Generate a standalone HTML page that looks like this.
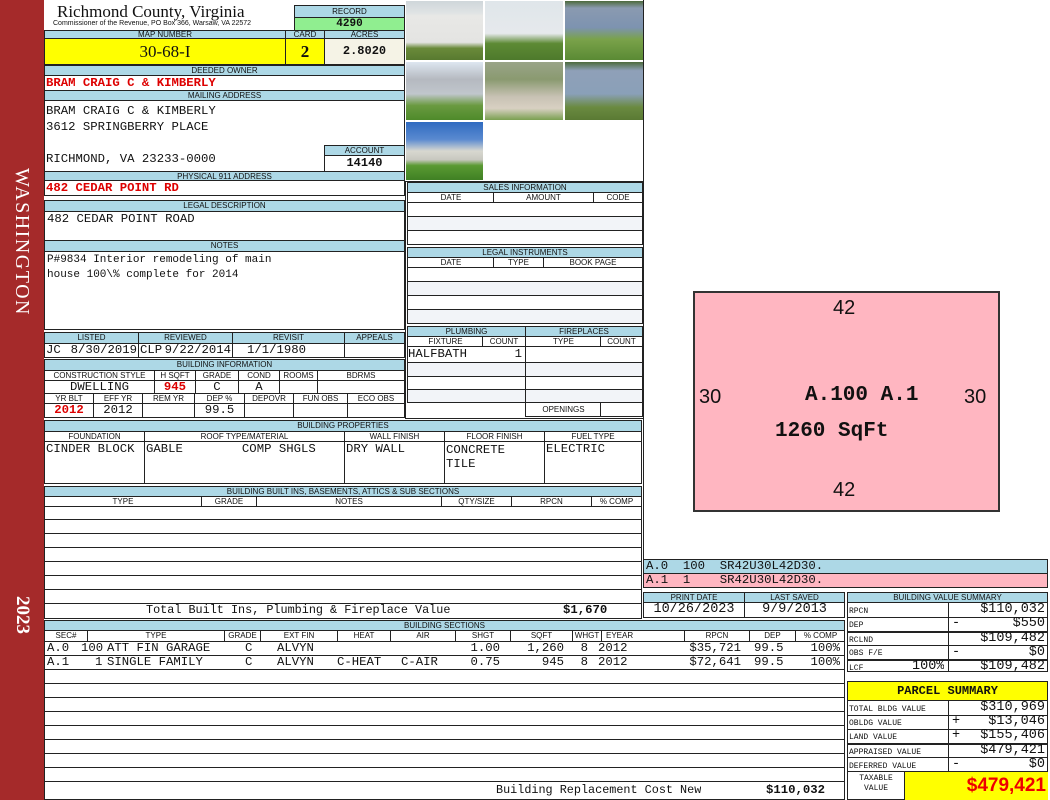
<!DOCTYPE html>
<html><head><meta charset="utf-8">
<style>
*{margin:0;padding:0;box-sizing:border-box}
body{width:1050px;height:800px;background:#fff;position:relative;overflow:hidden;font-family:"Liberation Mono",monospace;color:#111}
div{position:absolute}
.b{border:1px solid #222;background:#fff}
.h{background:#add8e6;border:1px solid #222;font:8px/9px "Liberation Sans",sans-serif;text-align:center;color:#111;white-space:nowrap;overflow:hidden}
.v{font:12.3px/13px "Liberation Mono",monospace;white-space:pre;overflow:hidden}
.big{font-size:13.5px}
.r{color:#d00;font-weight:bold}
.ln{border-top:1px solid #222;left:0;right:0;height:0}
.vl{border-left:1px solid #222;top:0;bottom:0;width:0}
.g{background:#f2f4f8}
.ph{border:1px solid #fff}
.sh{top:0;height:10px;font:8px/10px "Liberation Sans",sans-serif;text-align:center;border-left:1px solid #222}
</style></head><body>
<!-- sidebar -->
<div style="left:0;top:0;width:44px;height:800px;background:#a52a2a"></div>
<div style="left:7px;top:158px;width:30px;height:168px;"><div style="left:-69px;top:69px;width:168px;height:30px;transform:rotate(90deg);color:#fff;font:20px/30px 'Liberation Serif',serif;text-align:center;letter-spacing:1.5px">WASHINGTON</div></div>
<div style="left:7px;top:590px;width:30px;height:50px;"><div style="left:-10px;top:10px;width:50px;height:30px;transform:rotate(90deg);color:#fff;font:bold 19px/30px 'Liberation Serif',serif;text-align:center">2023</div></div>

<!-- header -->
<div style="left:57px;top:2px;font:17px/20px 'Liberation Serif',serif">Richmond County, Virginia</div>
<div style="left:53px;top:20px;font:7px/8px 'Liberation Sans',sans-serif">Commissioner of the Revenue, PO Box 366, Warsaw, VA 22572</div>
<div class="h" style="left:294px;top:5px;width:111px;height:13px;line-height:11px">RECORD</div>
<div style="left:294px;top:17px;width:111px;height:14px;background:#90ee90;border:1px solid #222;font:bold 11px/12px 'Liberation Mono';text-align:center">4290</div>
<div class="h" style="left:44px;top:30px;width:242px;height:9px;line-height:7px">MAP NUMBER</div>
<div class="h" style="left:285px;top:30px;width:40px;height:9px;line-height:7px">CARD</div>
<div class="h" style="left:324px;top:30px;width:81px;height:9px;line-height:7px">ACRES</div>
<div style="left:44px;top:38px;width:242px;height:27px;background:#ffff00;border:1px solid #222;font:17px/25px 'Liberation Serif',serif;text-align:center">30-68-I</div>
<div style="left:285px;top:38px;width:40px;height:27px;background:#ffff00;border:1px solid #222;font:bold 17px/25px 'Liberation Serif',serif;text-align:center">2</div>
<div style="left:324px;top:38px;width:81px;height:27px;background:#f5f3e6;border:1px solid #222;font:bold 12px/25px 'Liberation Mono';text-align:center">2.8020</div>

<div class="h" style="left:44px;top:65px;width:361px;height:11px">DEEDED OWNER</div>
<div class="b" style="left:44px;top:75px;width:361px;height:16px"><div class="v r" style="left:1px;top:1px">BRAM CRAIG C &amp; KIMBERLY</div></div>
<div class="h" style="left:44px;top:90px;width:361px;height:11px">MAILING ADDRESS</div>
<div class="b" style="left:44px;top:100px;width:361px;height:72px"><div class="v" style="left:1px;top:2px;line-height:16px">BRAM CRAIG C &amp; KIMBERLY
3612 SPRINGBERRY PLACE

RICHMOND, VA 23233-0000</div></div>
<div class="h" style="left:324px;top:145px;width:81px;height:11px">ACCOUNT</div>
<div class="b" style="left:324px;top:155px;width:81px;height:17px;font:bold 12px/15px 'Liberation Mono';text-align:center">14140</div>
<div class="h" style="left:44px;top:171px;width:361px;height:10px">PHYSICAL 911 ADDRESS</div>
<div class="b" style="left:44px;top:180px;width:361px;height:16px"><div class="v r" style="left:1px;top:1px">482 CEDAR POINT RD</div></div>

<div class="h" style="left:44px;top:200px;width:361px;height:12px">LEGAL DESCRIPTION</div>
<div class="b" style="left:44px;top:211px;width:361px;height:30px"><div class="v" style="left:2px;top:1px">482 CEDAR POINT ROAD</div></div>
<div class="h" style="left:44px;top:240px;width:361px;height:12px">NOTES</div>
<div class="b" style="left:44px;top:251px;width:361px;height:79px"><div class="v" style="left:2px;top:1px;line-height:15px;font-size:11px">P#9834 Interior remodeling of main
house 100\% complete for 2014</div></div>

<!-- listed -->
<div class="h" style="left:44px;top:332px;width:95px;height:12px">LISTED</div>
<div class="h" style="left:138px;top:332px;width:95px;height:12px">REVIEWED</div>
<div class="h" style="left:232px;top:332px;width:113px;height:12px">REVISIT</div>
<div class="h" style="left:344px;top:332px;width:61px;height:12px">APPEALS</div>
<div class="b" style="left:44px;top:343px;width:95px;height:15px"><div class="v" style="left:1px;top:0">JC</div><div class="v" style="right:1px;top:0">8/30/2019</div></div>
<div class="b" style="left:138px;top:343px;width:95px;height:15px"><div class="v" style="left:1px;top:0">CLP</div><div class="v" style="right:1px;top:0">9/22/2014</div></div>
<div class="b" style="left:232px;top:343px;width:113px;height:15px"><div class="v" style="left:14px;top:0">1/1/1980</div></div>
<div class="b" style="left:344px;top:343px;width:61px;height:15px"></div>

<div class="h" style="left:44px;top:359px;width:361px;height:12px">BUILDING INFORMATION</div>
<div class="h" style="left:44px;top:370px;width:111px;height:11px;background:#fff">CONSTRUCTION STYLE</div>
<div class="h" style="left:154px;top:370px;width:42px;height:11px;background:#fff">H SQFT</div>
<div class="h" style="left:195px;top:370px;width:44px;height:11px;background:#fff">GRADE</div>
<div class="h" style="left:238px;top:370px;width:42px;height:11px;background:#fff">COND</div>
<div class="h" style="left:279px;top:370px;width:39px;height:11px;background:#fff">ROOMS</div>
<div class="h" style="left:317px;top:370px;width:88px;height:11px;background:#fff">BDRMS</div>
<div class="b v" style="left:44px;top:380px;width:111px;height:14px;text-align:center">DWELLING</div>
<div class="b v r" style="left:154px;top:380px;width:42px;height:14px;text-align:center">945</div>
<div class="b v" style="left:195px;top:380px;width:44px;height:14px;text-align:center">C</div>
<div class="b v" style="left:238px;top:380px;width:42px;height:14px;text-align:center">A</div>
<div class="b" style="left:279px;top:380px;width:39px;height:14px"></div>
<div class="b" style="left:317px;top:380px;width:88px;height:14px"></div>
<div class="h" style="left:44px;top:393px;width:50px;height:11px;background:#fff">YR BLT</div>
<div class="h" style="left:93px;top:393px;width:50px;height:11px;background:#fff">EFF YR</div>
<div class="h" style="left:142px;top:393px;width:53px;height:11px;background:#fff">REM YR</div>
<div class="h" style="left:194px;top:393px;width:51px;height:11px;background:#fff">DEP %</div>
<div class="h" style="left:244px;top:393px;width:50px;height:11px;background:#fff">DEPOVR</div>
<div class="h" style="left:293px;top:393px;width:55px;height:11px;background:#fff">FUN OBS</div>
<div class="h" style="left:347px;top:393px;width:58px;height:11px;background:#fff">ECO OBS</div>
<div class="b v r" style="left:44px;top:403px;width:50px;height:15px;text-align:center">2012</div>
<div class="b v" style="left:93px;top:403px;width:50px;height:15px;text-align:center">2012</div>
<div class="b" style="left:142px;top:403px;width:53px;height:15px"></div>
<div class="b v" style="left:194px;top:403px;width:51px;height:15px;text-align:center">99.5</div>
<div class="b" style="left:244px;top:403px;width:50px;height:15px"></div>
<div class="b" style="left:293px;top:403px;width:55px;height:15px"></div>
<div class="b" style="left:347px;top:403px;width:58px;height:15px"></div>

<!-- building properties -->
<div class="h" style="left:44px;top:420px;width:598px;height:12px">BUILDING PROPERTIES</div>
<div class="h" style="left:44px;top:431px;width:101px;height:11px;background:#fff">FOUNDATION</div>
<div class="h" style="left:144px;top:431px;width:201px;height:11px;background:#fff">ROOF TYPE/MATERIAL</div>
<div class="h" style="left:344px;top:431px;width:101px;height:11px;background:#fff">WALL FINISH</div>
<div class="h" style="left:444px;top:431px;width:101px;height:11px;background:#fff">FLOOR FINISH</div>
<div class="h" style="left:544px;top:431px;width:98px;height:11px;background:#fff">FUEL TYPE</div>
<div class="b v" style="left:44px;top:441px;width:101px;height:43px;padding:1px 1px">CINDER BLOCK</div>
<div class="b v" style="left:144px;top:441px;width:201px;height:43px;padding:1px 1px">GABLE        COMP SHGLS</div>
<div class="b v" style="left:344px;top:441px;width:101px;height:43px;padding:1px 1px">DRY WALL</div>
<div class="b v" style="left:444px;top:441px;width:101px;height:43px;padding:1px 1px;line-height:14px">CONCRETE
TILE</div>
<div class="b v" style="left:544px;top:441px;width:98px;height:43px;padding:1px 1px">ELECTRIC</div>

<!-- built ins -->
<div class="h" style="left:44px;top:486px;width:598px;height:11px">BUILDING BUILT INS, BASEMENTS, ATTICS &amp; SUB SECTIONS</div>
<div class="b" style="left:44px;top:496px;width:598px;height:123px">
 <div class="sh" style="left:0;width:156px;border:none">TYPE</div>
 <div class="sh" style="left:156px;width:55px">GRADE</div>
 <div class="sh" style="left:211px;width:185px">NOTES</div>
 <div class="sh" style="left:396px;width:70px">QTY/SIZE</div>
 <div class="sh" style="left:466px;width:80px">RPCN</div>
 <div class="sh" style="left:546px;width:50px">% COMP</div>
 <div class="ln" style="top:9px"></div><div class="ln" style="top:22px"></div><div class="ln" style="top:36px"></div><div class="ln" style="top:50px"></div><div class="ln" style="top:64px"></div><div class="ln" style="top:78px"></div><div class="ln" style="top:92px"></div><div class="ln" style="top:106px"></div>
 <div class="v" style="left:101px;top:107px;font-size:11.8px">Total Built Ins, Plumbing &amp; Fireplace Value</div>
 <div class="v" style="left:518px;top:107px;font-weight:bold">$1,670</div>
</div>

<!-- building sections -->
<div class="h" style="left:44px;top:620px;width:801px;height:11px">BUILDING SECTIONS</div>
<div class="b" style="left:44px;top:630px;width:801px;height:170px">
 <div class="ln" style="top:10px"></div><div class="ln" style="top:24px"></div><div class="ln" style="top:38px"></div><div class="ln" style="top:52px"></div><div class="ln" style="top:66px"></div><div class="ln" style="top:80px"></div><div class="ln" style="top:94px"></div><div class="ln" style="top:108px"></div><div class="ln" style="top:122px"></div><div class="ln" style="top:136px"></div><div class="ln" style="top:150px"></div>
 <div class="sh" style="left:0;width:42px;border:none">SEC#</div>
 <div class="sh" style="left:42px;width:137px">TYPE</div>
 <div class="sh" style="left:179px;width:36px">GRADE</div>
 <div class="sh" style="left:215px;width:77px">EXT FIN</div>
 <div class="sh" style="left:292px;width:53px">HEAT</div>
 <div class="sh" style="left:345px;width:65px">AIR</div>
 <div class="sh" style="left:410px;width:55px">SHGT</div>
 <div class="sh" style="left:465px;width:62px">SQFT</div>
 <div class="sh" style="left:527px;width:29px">WHGT</div>
 <div class="sh" style="left:556px;width:83px;text-align:left;padding-left:4px">EYEAR</div>
 <div class="sh" style="left:639px;width:65px">RPCN</div>
 <div class="sh" style="left:704px;width:46px">DEP</div>
 <div class="sh" style="left:750px;width:50px">% COMP</div>
 <div class="v" style="left:2px;top:11px">A.0</div><div class="v" style="left:36px;top:11px">100</div><div class="v" style="left:62px;top:11px">ATT FIN GARAGE</div><div class="v" style="left:200px;top:11px">C</div><div class="v" style="left:232px;top:11px">ALVYN</div>
 <div class="v" style="right:344px;top:11px">1.00</div><div class="v" style="right:280px;top:11px">1,260</div><div class="v" style="right:256px;top:11px">8</div><div class="v" style="left:553px;top:11px">2012</div><div class="v" style="right:103px;top:11px">$35,721</div><div class="v" style="left:709px;top:11px">99.5</div><div class="v" style="right:4px;top:11px">100%</div>
 <div class="v" style="left:2px;top:25px">A.1</div><div class="v" style="left:50px;top:25px">1</div><div class="v" style="left:62px;top:25px">SINGLE FAMILY</div><div class="v" style="left:200px;top:25px">C</div><div class="v" style="left:232px;top:25px">ALVYN</div><div class="v" style="left:292px;top:25px">C-HEAT</div><div class="v" style="left:356px;top:25px">C-AIR</div>
 <div class="v" style="right:344px;top:25px">0.75</div><div class="v" style="right:280px;top:25px">945</div><div class="v" style="right:256px;top:25px">8</div><div class="v" style="left:553px;top:25px">2012</div><div class="v" style="right:103px;top:25px">$72,641</div><div class="v" style="left:709px;top:25px">99.5</div><div class="v" style="right:4px;top:25px">100%</div>
 <div class="v" style="left:451px;top:153px;font-size:11.8px">Building Replacement Cost New</div>
 <div class="v" style="left:721px;top:153px;font-weight:bold">$110,032</div>
</div>

<!-- photos -->
<div class="ph" style="left:405px;top:0;width:79px;height:61px;background:linear-gradient(#cfd6da 0,#dfe3e4 20%,#e8e8e6 25%,#e4e4e2 70%,#6a8a3a 80%,#587a30 100%)"></div>
<div class="ph" style="left:484px;top:0;width:80px;height:61px;background:linear-gradient(#dfe6ea 0,#e6e9ec 55%,#5d8a34 72%,#4e7a2c 100%)"></div>
<div class="ph" style="left:564px;top:0;width:80px;height:61px;background:linear-gradient(#4c6a3c 0,#8a9ab0 12%,#7d93b0 45%,#7aa24a 65%,#5a8a34 100%)"></div>
<div class="ph" style="left:405px;top:61px;width:79px;height:60px;background:linear-gradient(#dde6f0 0,#b5b9c0 30%,#c0c6cc 55%,#6a9a40 75%,#4e8a2a 100%)"></div>
<div class="ph" style="left:484px;top:61px;width:80px;height:60px;background:linear-gradient(#9aa488 0,#8a9a70 30%,#c8c2b4 60%,#d8d0c2 80%,#7aa050 100%)"></div>
<div class="ph" style="left:564px;top:61px;width:80px;height:60px;background:linear-gradient(#4c6a3c 0,#8fa0b8 15%,#8aa0b8 55%,#6a8a40 78%,#5a7a34 100%)"></div>
<div class="ph" style="left:405px;top:121px;width:79px;height:60px;background:linear-gradient(#2f6ac0 0,#5a8ad0 30%,#d8d8d0 50%,#c8c8c0 65%,#5a9a32 75%,#3f8024 100%)"></div>

<!-- sales -->
<div class="b" style="left:405px;top:181px;width:239px;height:238px"></div>
<div class="h" style="left:407px;top:182px;width:236px;height:11px">SALES INFORMATION</div>
<div class="b" style="left:407px;top:192px;width:236px;height:53px">
 <div class="sh" style="left:0;width:86px;border:none">DATE</div><div class="sh" style="left:85px;width:100px">AMOUNT</div><div class="sh" style="left:185px;width:49px">CODE</div>
 <div class="ln" style="top:9px"></div><div class="g" style="left:0;right:0;top:24px;height:13px"></div><div class="ln" style="top:23px"></div><div class="ln" style="top:37px"></div>
</div>
<div class="h" style="left:407px;top:247px;width:236px;height:11px">LEGAL INSTRUMENTS</div>
<div class="b" style="left:407px;top:257px;width:236px;height:67px">
 <div class="sh" style="left:0;width:86px;border:none">DATE</div><div class="sh" style="left:85px;width:50px">TYPE</div><div class="sh" style="left:135px;width:99px">BOOK PAGE</div>
 <div class="ln" style="top:9px"></div><div class="g" style="left:0;right:0;top:24px;height:13px"></div><div class="ln" style="top:23px"></div><div class="ln" style="top:37px"></div><div class="g" style="left:0;right:0;top:52px;height:13px"></div><div class="ln" style="top:51px"></div>
</div>
<div class="h" style="left:407px;top:326px;width:119px;height:11px">PLUMBING</div>
<div class="h" style="left:525px;top:326px;width:118px;height:11px">FIREPLACES</div>
<div class="b" style="left:407px;top:336px;width:119px;height:67px">
 <div class="sh" style="left:0;width:75px;border:none">FIXTURE</div><div class="sh" style="left:74px;width:43px">COUNT</div>
 <div class="ln" style="top:9px"></div>
 <div class="v" style="left:0;top:11px">HALFBATH</div><div class="v" style="right:3px;top:11px">1</div>
 <div class="g" style="left:0;right:0;top:26px;height:13px"></div><div class="ln" style="top:25px"></div><div class="ln" style="top:39px"></div><div class="g" style="left:0;right:0;top:53px;height:12px"></div><div class="ln" style="top:52px"></div>
</div>
<div class="b" style="left:525px;top:336px;width:118px;height:81px">
 <div class="sh" style="left:0;width:75px;border:none">TYPE</div><div class="sh" style="left:74px;width:42px">COUNT</div>
 <div class="ln" style="top:9px"></div>
 <div class="g" style="left:0;right:0;top:26px;height:13px"></div><div class="ln" style="top:25px"></div><div class="ln" style="top:39px"></div><div class="g" style="left:0;right:0;top:53px;height:12px"></div><div class="ln" style="top:52px"></div><div class="ln" style="top:65px"></div>
 <div class="sh" style="left:0;top:66px;width:75px;height:13px;border:none;line-height:13px">OPENINGS</div><div style="left:74px;top:65px;height:14px;border-left:1px solid #222"></div>
</div>

<!-- right sketch -->
<div style="left:643px;top:0;width:1px;height:560px;background:#222"></div>
<div style="left:693px;top:291px;width:307px;height:221px;background:#ffb6c1;border:2px solid #333"></div>
<div style="left:833px;top:297px;font:20px 'Liberation Sans'">42</div>
<div style="left:833px;top:479px;font:20px 'Liberation Sans'">42</div>
<div style="left:699px;top:386px;font:20px 'Liberation Sans'">30</div>
<div style="left:964px;top:386px;font:20px 'Liberation Sans'">30</div>
<div style="left:805px;top:384px;font:bold 21px 'Liberation Mono'">A.100 A.1</div>
<div style="left:775px;top:420px;font:bold 21px 'Liberation Mono'">1260 SqFt</div>
<div class="v" style="left:643px;top:559px;width:405px;height:15px;background:#add8e6;border:1px solid #222;padding-left:2px;line-height:13px">A.0  100  SR42U30L42D30.</div>
<div class="v" style="left:643px;top:573px;width:405px;height:15px;background:#ffb6c1;border:1px solid #222;padding-left:2px;line-height:13px">A.1  1    SR42U30L42D30.</div>

<div class="h" style="left:643px;top:592px;width:102px;height:11px">PRINT DATE</div>
<div class="h" style="left:744px;top:592px;width:101px;height:11px">LAST SAVED</div>
<div class="b v big" style="left:643px;top:602px;width:102px;height:16px;text-align:center;line-height:14px">10/26/2023</div>
<div class="b v big" style="left:744px;top:602px;width:101px;height:16px;text-align:center;line-height:14px">9/9/2013</div>

<div class="h" style="left:847px;top:592px;width:201px;height:11px">BUILDING VALUE SUMMARY</div>
<div class="b" style="left:847px;top:602px;width:201px;height:70px">
 <div class="vl" style="left:100px"></div>
 <div class="ln" style="top:14px"></div><div class="ln" style="top:28px;border-top-width:2px"></div><div class="ln" style="top:42px"></div><div class="ln" style="top:56px;border-top-width:2px"></div>
 <div class="v" style="left:1px;top:2px;font-size:8px">RPCN</div><div class="v big" style="right:2px;top:0">$110,032</div>
 <div class="v" style="left:1px;top:16px;font-size:8px">DEP</div><div class="v big" style="left:104px;top:14px">-</div><div class="v big" style="right:2px;top:14px">$550</div>
 <div class="v" style="left:1px;top:31px;font-size:8px">RCLND</div><div class="v big" style="right:2px;top:29px">$109,482</div>
 <div class="v" style="left:1px;top:44px;font-size:8px">OBS F/E</div><div class="v big" style="left:104px;top:43px">-</div><div class="v big" style="right:2px;top:43px">$0</div>
 <div class="v" style="left:1px;top:59px;font-size:8px">LCF</div><div class="v big" style="left:64px;top:57px">100%</div><div class="v big" style="right:2px;top:57px">$109,482</div>
</div>

<div style="left:847px;top:681px;width:201px;height:20px;background:#ffff00;border:1px solid #222;font:bold 12px/18px 'Liberation Mono';text-align:center">PARCEL SUMMARY</div>
<div class="b" style="left:847px;top:700px;width:201px;height:100px">
 <div class="vl" style="left:100px;bottom:28px"></div>
 <div class="ln" style="top:14px"></div><div class="ln" style="top:28px"></div><div class="ln" style="top:42px;border-top-width:2px"></div><div class="ln" style="top:56px"></div><div class="ln" style="top:70px"></div>
 <div class="v" style="left:1px;top:2px;font-size:8px">TOTAL BLDG VALUE</div><div class="v big" style="right:2px;top:0">$310,969</div>
 <div class="v" style="left:1px;top:16px;font-size:8px">OBLDG VALUE</div><div class="v big" style="left:104px;top:14px">+</div><div class="v big" style="right:2px;top:14px">$13,046</div>
 <div class="v" style="left:1px;top:30px;font-size:8px">LAND VALUE</div><div class="v big" style="left:104px;top:28px">+</div><div class="v big" style="right:2px;top:28px">$155,406</div>
 <div class="v" style="left:1px;top:45px;font-size:8px">APPRAISED VALUE</div><div class="v big" style="right:2px;top:43px">$479,421</div>
 <div class="v" style="left:1px;top:59px;font-size:8px">DEFERRED VALUE</div><div class="v big" style="left:104px;top:57px">-</div><div class="v big" style="right:2px;top:57px">$0</div>
 <div class="v" style="left:2px;top:73px;width:52px;font-size:8px;line-height:10px;text-align:center">TAXABLE
VALUE</div>
 <div style="left:56px;top:71px;width:144px;height:28px;background:#ffff00;border-left:1px solid #222;color:#e00;font:bold 19px/28px 'Liberation Sans';text-align:right;padding-right:2px">$479,421</div>
</div>
</body></html>
